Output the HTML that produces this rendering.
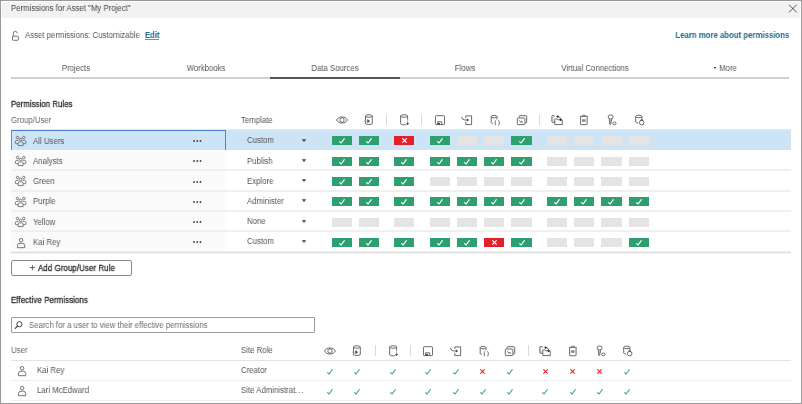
<!DOCTYPE html><html><head><meta charset="utf-8"><style>
html,body{margin:0;padding:0;width:802px;height:404px;overflow:hidden;background:#fff;font-family:"Liberation Sans", sans-serif;}
.t{position:absolute;white-space:nowrap;line-height:12px;will-change:transform;}
.r{position:absolute;}
.ic{position:absolute;overflow:visible;}
</style></head><body>
<div class="r" style="left:0.00px;top:0.00px;width:802.00px;height:404.00px;background:#fff;box-sizing:border-box;border:1px solid #9a9a9a;"></div>
<div class="r" style="left:2.00px;top:2.00px;width:798.00px;height:15.50px;background:#f2f2f2;"></div>
<div class="t" style="left:11.00px;transform-origin:0 0;top:1.93px;font-size:8.580px;transform:scaleX(0.9091);color:#444;font-weight:normal;">Permissions for Asset "My Project"</div>
<svg class="ic" style="left:788px;top:4px" width="10" height="10" viewBox="0 0 10 10"><path d="M1,0.7 L8.7,8.4 M8.7,0.7 L1,8.4" stroke="#444" stroke-width="0.9"/></svg>
<svg class="ic" style="left:11px;top:30px" width="9" height="12" viewBox="0 0 9 12"><path d="M2.3,6.2 V3.4 Q2.3,1.3 4.3,1.3 Q5.9,1.3 6.5,3.3" fill="none" stroke="#666" stroke-width="0.9"/><rect x="1.5" y="6.2" width="5.9" height="4.1" rx="0.8" fill="none" stroke="#666" stroke-width="0.9"/></svg>
<div class="t" style="left:25.00px;transform-origin:0 0;top:29.03px;font-size:8.580px;transform:scaleX(0.9091);color:#555;font-weight:normal;">Asset permissions: Customizable</div>
<div class="t" style="left:144.60px;transform-origin:0 0;top:29.03px;font-size:8.580px;transform:scaleX(0.9091);color:#1c6a8e;font-weight:bold;letter-spacing:-0.12px;">Edit</div>
<div class="r" style="left:144.60px;top:39.20px;width:14.30px;height:1.00px;background:#5f97b5;"></div>
<div class="t" style="right:12.20px;transform-origin:100% 0;top:29.03px;font-size:8.580px;transform:scaleX(0.9091);color:#1c6a8e;font-weight:bold;">Learn more about permissions</div>
<div class="r" style="left:11.00px;top:77.00px;width:778.00px;height:2.00px;background:#cfcfcf;"></div>
<div class="r" style="left:270.33px;top:77.00px;width:129.67px;height:2.00px;background:#555;"></div>
<div class="t" style="left:-24.17px;width:200px;text-align:center;transform-origin:50% 0;top:61.93px;font-size:8.580px;transform:scaleX(0.9091);color:#555;font-weight:normal;">Projects</div>
<div class="t" style="left:105.50px;width:200px;text-align:center;transform-origin:50% 0;top:61.93px;font-size:8.580px;transform:scaleX(0.9091);color:#555;font-weight:normal;">Workbooks</div>
<div class="t" style="left:235.17px;width:200px;text-align:center;transform-origin:50% 0;top:61.93px;font-size:8.580px;transform:scaleX(0.9091);color:#555;font-weight:normal;">Data Sources</div>
<div class="t" style="left:364.83px;width:200px;text-align:center;transform-origin:50% 0;top:61.93px;font-size:8.580px;transform:scaleX(0.9091);color:#555;font-weight:normal;">Flows</div>
<div class="t" style="left:494.50px;width:200px;text-align:center;transform-origin:50% 0;top:61.93px;font-size:8.580px;transform:scaleX(0.9091);color:#555;font-weight:normal;">Virtual Connections</div>
<div class="t" style="left:628.17px;width:200px;text-align:center;transform-origin:50% 0;top:61.93px;font-size:8.580px;transform:scaleX(0.9091);color:#555;font-weight:normal;">More</div>
<svg class="ic" style="left:712.50px;top:66px" width="4" height="4" viewBox="0 0 4 4"><path d="M0.7,1.1 H3.3 L2,2.9 Z" fill="#333"/></svg>
<div class="t" style="left:11.00px;transform-origin:0 0;top:97.83px;font-size:8.580px;transform:scaleX(0.9091);color:#333;font-weight:normal;letter-spacing:0.06px;-webkit-text-stroke:0.35px #333;">Permission Rules</div>
<div class="t" style="left:11.00px;transform-origin:0 0;top:114.03px;font-size:8.580px;transform:scaleX(0.9091);color:#666;font-weight:normal;">Group/User</div>
<div class="t" style="left:241.30px;transform-origin:0 0;top:113.93px;font-size:8.580px;transform:scaleX(0.9091);color:#555;font-weight:normal;">Template</div>
<svg class="ic" style="left:333.70px;top:111.70px" width="16" height="16" viewBox="-8 -8 16 16"><path d="M-5.4,0 C-3.4,-4.1 3.4,-4.1 5.4,0 C3.4,4.1 -3.4,4.1 -5.4,0 Z" fill="none" stroke="#5a5a5a" stroke-width="0.9"/><circle cx="0" cy="0" r="2.2" fill="none" stroke="#5a5a5a" stroke-width="0.9"/></svg>
<svg class="ic" style="left:360.90px;top:111.70px" width="16" height="16" viewBox="-8 -8 16 16"><path d="M-3.5,-4 V3.6 A3.6,1.3 0 0 0 3.3,3.6 V-4" fill="none" stroke="#5a5a5a" stroke-width="0.9"/><ellipse cx="-0.1" cy="-4" rx="3.4" ry="1.25" fill="none" stroke="#5a5a5a" stroke-width="0.9"/><path d="M-5.1,1.2 H-1.4" stroke="#aaa" stroke-width="0.9"/><path d="M-1.6,-0.9 L1,1.2 L-1.6,3.3 Z" fill="#444"/></svg>
<svg class="ic" style="left:396.35px;top:111.70px" width="16" height="16" viewBox="-8 -8 16 16"><path d="M3.6,-0.3 V-4 M-3.4,-4 V3.5 A3.5,1.3 0 0 0 2.2,4.6" fill="none" stroke="#5a5a5a" stroke-width="0.9"/><ellipse cx="0.1" cy="-4" rx="3.5" ry="1.25" fill="none" stroke="#5a5a5a" stroke-width="0.9"/><path d="M3.6,0.3 V3" stroke="#999" stroke-width="0.9"/><path d="M2.1,3 L5.1,3 L3.6,5.2 Z" fill="#444"/></svg>
<svg class="ic" style="left:431.95px;top:111.70px" width="16" height="16" viewBox="-8 -8 16 16"><rect x="-4.55" y="-4.3" width="9.1" height="8.9" rx="0.7" fill="none" stroke="#5a5a5a" stroke-width="0.9"/><path d="M-2.45,4.6 V1.8 H1.75 V4.6" fill="none" stroke="#5a5a5a" stroke-width="0.9"/><rect x="-2" y="2.9" width="1.9" height="1.9" fill="#444"/></svg>
<svg class="ic" style="left:459.05px;top:111.70px" width="16" height="16" viewBox="-8 -8 16 16"><path d="M-1.2,-2 V-4.1 H4.6 V4.6 H-1.2 V1.9" fill="none" stroke="#5a5a5a" stroke-width="0.9"/><path d="M-5.5,-3.2 Q-5,0 -2.2,0 H0.2" fill="none" stroke="#5a5a5a" stroke-width="0.9"/><path d="M-0.1,-1.6 L2.3,0 L-0.1,1.6 Z" fill="#444"/></svg>
<svg class="ic" style="left:486.15px;top:111.70px" width="16" height="16" viewBox="-8 -8 16 16"><path d="M-2.8,-3.4 V2.5 Q-2.8,3.3 -1.2,3.5 M3,-3.4 V-0.6" fill="none" stroke="#5a5a5a" stroke-width="0.9"/><ellipse cx="0.1" cy="-3.4" rx="2.9" ry="1.2" fill="none" stroke="#5a5a5a" stroke-width="0.9"/><path d="M2.1,0.3 Q1.3,0.4 1.3,1.6 V2.2 Q1.3,2.7 0.8,2.7 Q1.3,2.8 1.3,3.3 V3.9 Q1.3,5.1 2.1,5.2 M4.4,0.3 Q5.2,0.4 5.2,1.6 V2.2 Q5.2,2.7 5.7,2.7 Q5.2,2.8 5.2,3.3 V3.9 Q5.2,5.1 4.4,5.2" fill="none" stroke="#5a5a5a" stroke-width="0.85"/></svg>
<svg class="ic" style="left:513.55px;top:111.70px" width="16" height="16" viewBox="-8 -8 16 16"><path d="M-2.8,-2.5 V-3.7 Q-2.8,-4.3 -2.1,-4.3 H4.1 Q4.7,-4.3 4.7,-3.6 V2.2 Q4.7,2.8 4.1,2.8 H3.1" fill="none" stroke="#5a5a5a" stroke-width="0.9"/><rect x="-4.7" y="-2.0" width="7.6" height="6.6" rx="0.8" fill="none" stroke="#5a5a5a" stroke-width="0.9"/><path d="M-2.6,0.2 L-1.2,2.3 L-0.4,1 L0.6,2.8" fill="none" stroke="#5a5a5a" stroke-width="0.85"/></svg>
<svg class="ic" style="left:548.95px;top:111.70px" width="16" height="16" viewBox="-8 -8 16 16"><path d="M-2.4,2.3 H-4.6 Q-5.1,2.3 -5.1,1.8 V-3.9 Q-5.1,-4.5 -4.5,-4.5 H-3.3 Q-2.5,-4.5 -2.5,-3.7" fill="#e6e6e6" stroke="#5a5a5a" stroke-width="0.9"/><path d="M-2.2,4.6 V-0.6 Q-2.2,-1.1 -1.7,-1.1 H-0.1 L0.7,-0.2 H4.8 Q5.3,-0.2 5.3,0.3 V4.6 Z" fill="#fff" stroke="#5a5a5a" stroke-width="0.9"/><path d="M0.6,-3.4 Q3.6,-3.6 3.7,-0.4" fill="none" stroke="#5a5a5a" stroke-width="0.9"/><path d="M0.6,-4.8 L2,-3.4 L0.6,-2 L-0.8,-3.4 Z" fill="#333"/><path d="M3.7,-1.6 L5.1,-0.2 L3.7,1.2 L2.3,-0.2 Z" fill="#333"/></svg>
<svg class="ic" style="left:576.10px;top:111.70px" width="16" height="16" viewBox="-8 -8 16 16"><path d="M-3.4,-3.5 V4.2 Q-3.4,4.7 -2.9,4.7 H2.6 Q3.1,4.7 3.1,4.2 V-3.5" fill="none" stroke="#5a5a5a" stroke-width="0.9"/><path d="M-3.9,-3.6 H3.6 M-1.9,-3.7 Q-1.9,-4.9 -0.15,-4.9 Q1.6,-4.9 1.6,-3.7" fill="none" stroke="#5a5a5a" stroke-width="0.9"/><rect x="-2" y="-0.7" width="3.6" height="2.5" fill="#8a8a8a"/></svg>
<svg class="ic" style="left:603.45px;top:111.70px" width="16" height="16" viewBox="-8 -8 16 16"><ellipse cx="-0.35" cy="-3.1" rx="2.5" ry="2.0" fill="none" stroke="#5a5a5a" stroke-width="0.9"/><path d="M-1.7,-1.3 L-1.3,4.3 Q-0.85,4.9 -0.4,4.3 L0.9,-1.3" fill="#bbb" stroke="#5a5a5a" stroke-width="0.8" stroke-linejoin="round"/><ellipse cx="3.35" cy="3.4" rx="1.7" ry="1.35" fill="none" stroke="#5a5a5a" stroke-width="0.9"/></svg>
<svg class="ic" style="left:630.90px;top:111.70px" width="16" height="16" viewBox="-8 -8 16 16"><path d="M-3.3,-3.6 V2.1 Q-3.3,2.9 -0.9,3.1 M2.9,-3.6 V-0.2" fill="none" stroke="#5a5a5a" stroke-width="0.9"/><ellipse cx="-0.2" cy="-3.6" rx="3.1" ry="1.25" fill="none" stroke="#5a5a5a" stroke-width="0.9"/><circle cx="2.65" cy="2.6" r="2.3" fill="#fff" stroke="#5a5a5a" stroke-width="0.9"/><path d="M1.5,0.6 Q1.8,-0.7 2.9,-0.7 Q3.9,-0.6 3.9,0.6 Z" fill="#333"/></svg>
<div class="r" style="left:386.00px;top:114.50px;width:1.00px;height:10.50px;background:#d9d9d9;"></div>
<div class="r" style="left:421.20px;top:114.50px;width:1.00px;height:10.50px;background:#d9d9d9;"></div>
<div class="r" style="left:539.10px;top:114.50px;width:1.00px;height:10.50px;background:#d9d9d9;"></div>
<div class="r" style="left:11.00px;top:129.00px;width:779.50px;height:1.00px;background:#e8e8e8;"></div>
<div class="r" style="left:11.00px;top:130.00px;width:779.50px;height:19.80px;background:#cde3f6;"></div>
<div class="r" style="left:11.00px;top:130.00px;width:214.50px;height:19.80px;background:transparent;box-sizing:border-box;border-left:1px solid #5a8fd0;border-top:1px solid #4a80c4;border-right:1.5px solid #4a80c4;"></div>
<svg class="ic" style="left:14.80px;top:134.90px" width="12" height="12" viewBox="0 0 12 12"><circle cx="2.5" cy="2.5" r="1.25" fill="none" stroke="#666" stroke-width="0.85"/><circle cx="8.8" cy="2.5" r="1.25" fill="none" stroke="#666" stroke-width="0.85"/><circle cx="5.65" cy="4.4" r="1.25" fill="none" stroke="#666" stroke-width="0.85"/><path d="M3.1,8.7 H1.2 Q0.4,8.7 0.4,7.9 V6.8 Q0.4,5.4 1.8,5.4 H3.6" fill="none" stroke="#666" stroke-width="0.85"/><path d="M8.2,8.7 H10.1 Q10.9,8.7 10.9,7.9 V6.8 Q10.9,5.4 9.5,5.4 H7.7" fill="none" stroke="#666" stroke-width="0.85"/><path d="M3.2,10.6 V8.3 Q3.2,6.8 4.6,6.8 H6.7 Q8.1,6.8 8.1,8.3 V10.6 Z" fill="none" stroke="#666" stroke-width="0.85"/></svg>
<div class="t" style="left:33.40px;transform-origin:0 0;top:134.73px;font-size:8.580px;transform:scaleX(0.9091);color:#555;font-weight:normal;">All Users</div>
<svg class="ic" style="left:191.70px;top:139.10px" width="12" height="4" viewBox="0 0 12 4"><circle cx="2" cy="2" r="0.95" fill="#444"/><circle cx="5.25" cy="2" r="0.95" fill="#444"/><circle cx="8.5" cy="2" r="0.95" fill="#444"/></svg>
<div class="t" style="left:246.60px;transform-origin:0 0;top:134.33px;font-size:8.580px;transform:scaleX(0.9091);color:#555;font-weight:normal;">Custom</div>
<svg class="ic" style="left:301.30px;top:137.80px" width="6" height="5" viewBox="0 0 6 5"><path d="M0.8,1.2 H5.2 L3,3.9 Z" fill="#444"/></svg>
<div class="r" style="left:331.60px;top:136.30px;width:20.20px;height:9.00px;background:#2e9f6e;"></div>
<svg class="ic" style="left:336.70px;top:136.30px" width="10" height="10" viewBox="-5 -5 10 10"><path d="M-2.4,0.6 L-0.9,2 L2.3,-2.3" fill="none" stroke="#fff" stroke-width="1.15" stroke-linecap="round" stroke-linejoin="round"/></svg>
<div class="r" style="left:358.80px;top:136.30px;width:20.20px;height:9.00px;background:#2e9f6e;"></div>
<svg class="ic" style="left:363.90px;top:136.30px" width="10" height="10" viewBox="-5 -5 10 10"><path d="M-2.4,0.6 L-0.9,2 L2.3,-2.3" fill="none" stroke="#fff" stroke-width="1.15" stroke-linecap="round" stroke-linejoin="round"/></svg>
<div class="r" style="left:394.25px;top:136.30px;width:20.20px;height:9.00px;background:#e3202a;"></div>
<svg class="ic" style="left:399px;top:135px" width="10" height="10" viewBox="-5.5 -5.5 10 10"><path d="M-2.15,-2.15 L2.15,2.15 M2.15,-2.15 L-2.15,2.15" fill="none" stroke="#fff" stroke-width="1.15" stroke-linecap="butt"/></svg>
<div class="r" style="left:429.85px;top:136.30px;width:20.20px;height:9.00px;background:#2e9f6e;"></div>
<svg class="ic" style="left:434.95px;top:136.30px" width="10" height="10" viewBox="-5 -5 10 10"><path d="M-2.4,0.6 L-0.9,2 L2.3,-2.3" fill="none" stroke="#fff" stroke-width="1.15" stroke-linecap="round" stroke-linejoin="round"/></svg>
<div class="r" style="left:456.95px;top:136.30px;width:20.20px;height:9.00px;background:#e4e4e4;"></div>
<div class="r" style="left:484.05px;top:136.30px;width:20.20px;height:9.00px;background:#e4e4e4;"></div>
<div class="r" style="left:511.45px;top:136.30px;width:20.20px;height:9.00px;background:#2e9f6e;"></div>
<svg class="ic" style="left:516.55px;top:136.30px" width="10" height="10" viewBox="-5 -5 10 10"><path d="M-2.4,0.6 L-0.9,2 L2.3,-2.3" fill="none" stroke="#fff" stroke-width="1.15" stroke-linecap="round" stroke-linejoin="round"/></svg>
<div class="r" style="left:546.85px;top:136.30px;width:20.20px;height:9.00px;background:#e4e4e4;"></div>
<div class="r" style="left:574.00px;top:136.30px;width:20.20px;height:9.00px;background:#e4e4e4;"></div>
<div class="r" style="left:601.35px;top:136.30px;width:20.20px;height:9.00px;background:#e4e4e4;"></div>
<div class="r" style="left:628.80px;top:136.30px;width:20.20px;height:9.00px;background:#e4e4e4;"></div>
<div class="r" style="left:11.00px;top:151.00px;width:214.00px;height:21.00px;background:#fafafa;"></div>
<svg class="ic" style="left:14.80px;top:155.10px" width="12" height="12" viewBox="0 0 12 12"><circle cx="2.5" cy="2.5" r="1.25" fill="none" stroke="#666" stroke-width="0.85"/><circle cx="8.8" cy="2.5" r="1.25" fill="none" stroke="#666" stroke-width="0.85"/><circle cx="5.65" cy="4.4" r="1.25" fill="none" stroke="#666" stroke-width="0.85"/><path d="M3.1,8.7 H1.2 Q0.4,8.7 0.4,7.9 V6.8 Q0.4,5.4 1.8,5.4 H3.6" fill="none" stroke="#666" stroke-width="0.85"/><path d="M8.2,8.7 H10.1 Q10.9,8.7 10.9,7.9 V6.8 Q10.9,5.4 9.5,5.4 H7.7" fill="none" stroke="#666" stroke-width="0.85"/><path d="M3.2,10.6 V8.3 Q3.2,6.8 4.6,6.8 H6.7 Q8.1,6.8 8.1,8.3 V10.6 Z" fill="none" stroke="#666" stroke-width="0.85"/></svg>
<div class="t" style="left:33.40px;transform-origin:0 0;top:154.93px;font-size:8.580px;transform:scaleX(0.9091);color:#555;font-weight:normal;">Analysts</div>
<svg class="ic" style="left:191.70px;top:159.30px" width="12" height="4" viewBox="0 0 12 4"><circle cx="2" cy="2" r="0.95" fill="#444"/><circle cx="5.25" cy="2" r="0.95" fill="#444"/><circle cx="8.5" cy="2" r="0.95" fill="#444"/></svg>
<div class="t" style="left:246.60px;transform-origin:0 0;top:154.53px;font-size:8.580px;transform:scaleX(0.9091);color:#555;font-weight:normal;">Publish</div>
<svg class="ic" style="left:301.30px;top:158.00px" width="6" height="5" viewBox="0 0 6 5"><path d="M0.8,1.2 H5.2 L3,3.9 Z" fill="#444"/></svg>
<div class="r" style="left:331.60px;top:156.60px;width:20.20px;height:9.00px;background:#2e9f6e;"></div>
<svg class="ic" style="left:336.70px;top:156.60px" width="10" height="10" viewBox="-5 -5 10 10"><path d="M-2.4,0.6 L-0.9,2 L2.3,-2.3" fill="none" stroke="#fff" stroke-width="1.15" stroke-linecap="round" stroke-linejoin="round"/></svg>
<div class="r" style="left:358.80px;top:156.60px;width:20.20px;height:9.00px;background:#2e9f6e;"></div>
<svg class="ic" style="left:363.90px;top:156.60px" width="10" height="10" viewBox="-5 -5 10 10"><path d="M-2.4,0.6 L-0.9,2 L2.3,-2.3" fill="none" stroke="#fff" stroke-width="1.15" stroke-linecap="round" stroke-linejoin="round"/></svg>
<div class="r" style="left:394.25px;top:156.60px;width:20.20px;height:9.00px;background:#2e9f6e;"></div>
<svg class="ic" style="left:399.35px;top:156.60px" width="10" height="10" viewBox="-5 -5 10 10"><path d="M-2.4,0.6 L-0.9,2 L2.3,-2.3" fill="none" stroke="#fff" stroke-width="1.15" stroke-linecap="round" stroke-linejoin="round"/></svg>
<div class="r" style="left:429.85px;top:156.60px;width:20.20px;height:9.00px;background:#2e9f6e;"></div>
<svg class="ic" style="left:434.95px;top:156.60px" width="10" height="10" viewBox="-5 -5 10 10"><path d="M-2.4,0.6 L-0.9,2 L2.3,-2.3" fill="none" stroke="#fff" stroke-width="1.15" stroke-linecap="round" stroke-linejoin="round"/></svg>
<div class="r" style="left:456.95px;top:156.60px;width:20.20px;height:9.00px;background:#2e9f6e;"></div>
<svg class="ic" style="left:462.05px;top:156.60px" width="10" height="10" viewBox="-5 -5 10 10"><path d="M-2.4,0.6 L-0.9,2 L2.3,-2.3" fill="none" stroke="#fff" stroke-width="1.15" stroke-linecap="round" stroke-linejoin="round"/></svg>
<div class="r" style="left:484.05px;top:156.60px;width:20.20px;height:9.00px;background:#2e9f6e;"></div>
<svg class="ic" style="left:489.15px;top:156.60px" width="10" height="10" viewBox="-5 -5 10 10"><path d="M-2.4,0.6 L-0.9,2 L2.3,-2.3" fill="none" stroke="#fff" stroke-width="1.15" stroke-linecap="round" stroke-linejoin="round"/></svg>
<div class="r" style="left:511.45px;top:156.60px;width:20.20px;height:9.00px;background:#2e9f6e;"></div>
<svg class="ic" style="left:516.55px;top:156.60px" width="10" height="10" viewBox="-5 -5 10 10"><path d="M-2.4,0.6 L-0.9,2 L2.3,-2.3" fill="none" stroke="#fff" stroke-width="1.15" stroke-linecap="round" stroke-linejoin="round"/></svg>
<div class="r" style="left:546.85px;top:156.60px;width:20.20px;height:9.00px;background:#e4e4e4;"></div>
<div class="r" style="left:574.00px;top:156.60px;width:20.20px;height:9.00px;background:#e4e4e4;"></div>
<div class="r" style="left:601.35px;top:156.60px;width:20.20px;height:9.00px;background:#e4e4e4;"></div>
<div class="r" style="left:628.80px;top:156.60px;width:20.20px;height:9.00px;background:#e4e4e4;"></div>
<div class="r" style="left:11.00px;top:170.00px;width:214.00px;height:21.00px;background:#fafafa;"></div>
<svg class="ic" style="left:14.80px;top:175.30px" width="12" height="12" viewBox="0 0 12 12"><circle cx="2.5" cy="2.5" r="1.25" fill="none" stroke="#666" stroke-width="0.85"/><circle cx="8.8" cy="2.5" r="1.25" fill="none" stroke="#666" stroke-width="0.85"/><circle cx="5.65" cy="4.4" r="1.25" fill="none" stroke="#666" stroke-width="0.85"/><path d="M3.1,8.7 H1.2 Q0.4,8.7 0.4,7.9 V6.8 Q0.4,5.4 1.8,5.4 H3.6" fill="none" stroke="#666" stroke-width="0.85"/><path d="M8.2,8.7 H10.1 Q10.9,8.7 10.9,7.9 V6.8 Q10.9,5.4 9.5,5.4 H7.7" fill="none" stroke="#666" stroke-width="0.85"/><path d="M3.2,10.6 V8.3 Q3.2,6.8 4.6,6.8 H6.7 Q8.1,6.8 8.1,8.3 V10.6 Z" fill="none" stroke="#666" stroke-width="0.85"/></svg>
<div class="t" style="left:33.40px;transform-origin:0 0;top:175.13px;font-size:8.580px;transform:scaleX(0.9091);color:#555;font-weight:normal;">Green</div>
<svg class="ic" style="left:191.70px;top:179.50px" width="12" height="4" viewBox="0 0 12 4"><circle cx="2" cy="2" r="0.95" fill="#444"/><circle cx="5.25" cy="2" r="0.95" fill="#444"/><circle cx="8.5" cy="2" r="0.95" fill="#444"/></svg>
<div class="t" style="left:246.60px;transform-origin:0 0;top:174.73px;font-size:8.580px;transform:scaleX(0.9091);color:#555;font-weight:normal;">Explore</div>
<svg class="ic" style="left:301.30px;top:178.20px" width="6" height="5" viewBox="0 0 6 5"><path d="M0.8,1.2 H5.2 L3,3.9 Z" fill="#444"/></svg>
<div class="r" style="left:331.60px;top:176.90px;width:20.20px;height:9.00px;background:#2e9f6e;"></div>
<svg class="ic" style="left:336.70px;top:176.90px" width="10" height="10" viewBox="-5 -5 10 10"><path d="M-2.4,0.6 L-0.9,2 L2.3,-2.3" fill="none" stroke="#fff" stroke-width="1.15" stroke-linecap="round" stroke-linejoin="round"/></svg>
<div class="r" style="left:358.80px;top:176.90px;width:20.20px;height:9.00px;background:#2e9f6e;"></div>
<svg class="ic" style="left:363.90px;top:176.90px" width="10" height="10" viewBox="-5 -5 10 10"><path d="M-2.4,0.6 L-0.9,2 L2.3,-2.3" fill="none" stroke="#fff" stroke-width="1.15" stroke-linecap="round" stroke-linejoin="round"/></svg>
<div class="r" style="left:394.25px;top:176.90px;width:20.20px;height:9.00px;background:#2e9f6e;"></div>
<svg class="ic" style="left:399.35px;top:176.90px" width="10" height="10" viewBox="-5 -5 10 10"><path d="M-2.4,0.6 L-0.9,2 L2.3,-2.3" fill="none" stroke="#fff" stroke-width="1.15" stroke-linecap="round" stroke-linejoin="round"/></svg>
<div class="r" style="left:429.85px;top:176.90px;width:20.20px;height:9.00px;background:#e4e4e4;"></div>
<div class="r" style="left:456.95px;top:176.90px;width:20.20px;height:9.00px;background:#e4e4e4;"></div>
<div class="r" style="left:484.05px;top:176.90px;width:20.20px;height:9.00px;background:#e4e4e4;"></div>
<div class="r" style="left:511.45px;top:176.90px;width:20.20px;height:9.00px;background:#e4e4e4;"></div>
<div class="r" style="left:546.85px;top:176.90px;width:20.20px;height:9.00px;background:#e4e4e4;"></div>
<div class="r" style="left:574.00px;top:176.90px;width:20.20px;height:9.00px;background:#e4e4e4;"></div>
<div class="r" style="left:601.35px;top:176.90px;width:20.20px;height:9.00px;background:#e4e4e4;"></div>
<div class="r" style="left:628.80px;top:176.90px;width:20.20px;height:9.00px;background:#e4e4e4;"></div>
<div class="r" style="left:11.00px;top:191.00px;width:214.00px;height:21.00px;background:#fafafa;"></div>
<svg class="ic" style="left:14.80px;top:195.50px" width="12" height="12" viewBox="0 0 12 12"><circle cx="2.5" cy="2.5" r="1.25" fill="none" stroke="#666" stroke-width="0.85"/><circle cx="8.8" cy="2.5" r="1.25" fill="none" stroke="#666" stroke-width="0.85"/><circle cx="5.65" cy="4.4" r="1.25" fill="none" stroke="#666" stroke-width="0.85"/><path d="M3.1,8.7 H1.2 Q0.4,8.7 0.4,7.9 V6.8 Q0.4,5.4 1.8,5.4 H3.6" fill="none" stroke="#666" stroke-width="0.85"/><path d="M8.2,8.7 H10.1 Q10.9,8.7 10.9,7.9 V6.8 Q10.9,5.4 9.5,5.4 H7.7" fill="none" stroke="#666" stroke-width="0.85"/><path d="M3.2,10.6 V8.3 Q3.2,6.8 4.6,6.8 H6.7 Q8.1,6.8 8.1,8.3 V10.6 Z" fill="none" stroke="#666" stroke-width="0.85"/></svg>
<div class="t" style="left:33.40px;transform-origin:0 0;top:195.33px;font-size:8.580px;transform:scaleX(0.9091);color:#555;font-weight:normal;">Purple</div>
<svg class="ic" style="left:191.70px;top:199.70px" width="12" height="4" viewBox="0 0 12 4"><circle cx="2" cy="2" r="0.95" fill="#444"/><circle cx="5.25" cy="2" r="0.95" fill="#444"/><circle cx="8.5" cy="2" r="0.95" fill="#444"/></svg>
<div class="t" style="left:246.60px;transform-origin:0 0;top:194.93px;font-size:8.580px;transform:scaleX(0.9091);color:#555;font-weight:normal;">Administer</div>
<svg class="ic" style="left:301.30px;top:198.40px" width="6" height="5" viewBox="0 0 6 5"><path d="M0.8,1.2 H5.2 L3,3.9 Z" fill="#444"/></svg>
<div class="r" style="left:331.60px;top:197.20px;width:20.20px;height:9.00px;background:#2e9f6e;"></div>
<svg class="ic" style="left:336.70px;top:197.20px" width="10" height="10" viewBox="-5 -5 10 10"><path d="M-2.4,0.6 L-0.9,2 L2.3,-2.3" fill="none" stroke="#fff" stroke-width="1.15" stroke-linecap="round" stroke-linejoin="round"/></svg>
<div class="r" style="left:358.80px;top:197.20px;width:20.20px;height:9.00px;background:#2e9f6e;"></div>
<svg class="ic" style="left:363.90px;top:197.20px" width="10" height="10" viewBox="-5 -5 10 10"><path d="M-2.4,0.6 L-0.9,2 L2.3,-2.3" fill="none" stroke="#fff" stroke-width="1.15" stroke-linecap="round" stroke-linejoin="round"/></svg>
<div class="r" style="left:394.25px;top:197.20px;width:20.20px;height:9.00px;background:#2e9f6e;"></div>
<svg class="ic" style="left:399.35px;top:197.20px" width="10" height="10" viewBox="-5 -5 10 10"><path d="M-2.4,0.6 L-0.9,2 L2.3,-2.3" fill="none" stroke="#fff" stroke-width="1.15" stroke-linecap="round" stroke-linejoin="round"/></svg>
<div class="r" style="left:429.85px;top:197.20px;width:20.20px;height:9.00px;background:#2e9f6e;"></div>
<svg class="ic" style="left:434.95px;top:197.20px" width="10" height="10" viewBox="-5 -5 10 10"><path d="M-2.4,0.6 L-0.9,2 L2.3,-2.3" fill="none" stroke="#fff" stroke-width="1.15" stroke-linecap="round" stroke-linejoin="round"/></svg>
<div class="r" style="left:456.95px;top:197.20px;width:20.20px;height:9.00px;background:#2e9f6e;"></div>
<svg class="ic" style="left:462.05px;top:197.20px" width="10" height="10" viewBox="-5 -5 10 10"><path d="M-2.4,0.6 L-0.9,2 L2.3,-2.3" fill="none" stroke="#fff" stroke-width="1.15" stroke-linecap="round" stroke-linejoin="round"/></svg>
<div class="r" style="left:484.05px;top:197.20px;width:20.20px;height:9.00px;background:#2e9f6e;"></div>
<svg class="ic" style="left:489.15px;top:197.20px" width="10" height="10" viewBox="-5 -5 10 10"><path d="M-2.4,0.6 L-0.9,2 L2.3,-2.3" fill="none" stroke="#fff" stroke-width="1.15" stroke-linecap="round" stroke-linejoin="round"/></svg>
<div class="r" style="left:511.45px;top:197.20px;width:20.20px;height:9.00px;background:#2e9f6e;"></div>
<svg class="ic" style="left:516.55px;top:197.20px" width="10" height="10" viewBox="-5 -5 10 10"><path d="M-2.4,0.6 L-0.9,2 L2.3,-2.3" fill="none" stroke="#fff" stroke-width="1.15" stroke-linecap="round" stroke-linejoin="round"/></svg>
<div class="r" style="left:546.85px;top:197.20px;width:20.20px;height:9.00px;background:#2e9f6e;"></div>
<svg class="ic" style="left:551.95px;top:197.20px" width="10" height="10" viewBox="-5 -5 10 10"><path d="M-2.4,0.6 L-0.9,2 L2.3,-2.3" fill="none" stroke="#fff" stroke-width="1.15" stroke-linecap="round" stroke-linejoin="round"/></svg>
<div class="r" style="left:574.00px;top:197.20px;width:20.20px;height:9.00px;background:#2e9f6e;"></div>
<svg class="ic" style="left:579.10px;top:197.20px" width="10" height="10" viewBox="-5 -5 10 10"><path d="M-2.4,0.6 L-0.9,2 L2.3,-2.3" fill="none" stroke="#fff" stroke-width="1.15" stroke-linecap="round" stroke-linejoin="round"/></svg>
<div class="r" style="left:601.35px;top:197.20px;width:20.20px;height:9.00px;background:#2e9f6e;"></div>
<svg class="ic" style="left:606.45px;top:197.20px" width="10" height="10" viewBox="-5 -5 10 10"><path d="M-2.4,0.6 L-0.9,2 L2.3,-2.3" fill="none" stroke="#fff" stroke-width="1.15" stroke-linecap="round" stroke-linejoin="round"/></svg>
<div class="r" style="left:628.80px;top:197.20px;width:20.20px;height:9.00px;background:#2e9f6e;"></div>
<svg class="ic" style="left:633.90px;top:197.20px" width="10" height="10" viewBox="-5 -5 10 10"><path d="M-2.4,0.6 L-0.9,2 L2.3,-2.3" fill="none" stroke="#fff" stroke-width="1.15" stroke-linecap="round" stroke-linejoin="round"/></svg>
<div class="r" style="left:11.00px;top:211.00px;width:214.00px;height:21.00px;background:#fafafa;"></div>
<svg class="ic" style="left:14.80px;top:215.70px" width="12" height="12" viewBox="0 0 12 12"><circle cx="2.5" cy="2.5" r="1.25" fill="none" stroke="#666" stroke-width="0.85"/><circle cx="8.8" cy="2.5" r="1.25" fill="none" stroke="#666" stroke-width="0.85"/><circle cx="5.65" cy="4.4" r="1.25" fill="none" stroke="#666" stroke-width="0.85"/><path d="M3.1,8.7 H1.2 Q0.4,8.7 0.4,7.9 V6.8 Q0.4,5.4 1.8,5.4 H3.6" fill="none" stroke="#666" stroke-width="0.85"/><path d="M8.2,8.7 H10.1 Q10.9,8.7 10.9,7.9 V6.8 Q10.9,5.4 9.5,5.4 H7.7" fill="none" stroke="#666" stroke-width="0.85"/><path d="M3.2,10.6 V8.3 Q3.2,6.8 4.6,6.8 H6.7 Q8.1,6.8 8.1,8.3 V10.6 Z" fill="none" stroke="#666" stroke-width="0.85"/></svg>
<div class="t" style="left:33.40px;transform-origin:0 0;top:215.53px;font-size:8.580px;transform:scaleX(0.9091);color:#555;font-weight:normal;">Yellow</div>
<svg class="ic" style="left:191.70px;top:219.90px" width="12" height="4" viewBox="0 0 12 4"><circle cx="2" cy="2" r="0.95" fill="#444"/><circle cx="5.25" cy="2" r="0.95" fill="#444"/><circle cx="8.5" cy="2" r="0.95" fill="#444"/></svg>
<div class="t" style="left:246.60px;transform-origin:0 0;top:215.13px;font-size:8.580px;transform:scaleX(0.9091);color:#555;font-weight:normal;">None</div>
<svg class="ic" style="left:301.30px;top:218.60px" width="6" height="5" viewBox="0 0 6 5"><path d="M0.8,1.2 H5.2 L3,3.9 Z" fill="#444"/></svg>
<div class="r" style="left:331.60px;top:217.50px;width:20.20px;height:9.00px;background:#e4e4e4;"></div>
<div class="r" style="left:358.80px;top:217.50px;width:20.20px;height:9.00px;background:#e4e4e4;"></div>
<div class="r" style="left:394.25px;top:217.50px;width:20.20px;height:9.00px;background:#e4e4e4;"></div>
<div class="r" style="left:429.85px;top:217.50px;width:20.20px;height:9.00px;background:#e4e4e4;"></div>
<div class="r" style="left:456.95px;top:217.50px;width:20.20px;height:9.00px;background:#e4e4e4;"></div>
<div class="r" style="left:484.05px;top:217.50px;width:20.20px;height:9.00px;background:#e4e4e4;"></div>
<div class="r" style="left:511.45px;top:217.50px;width:20.20px;height:9.00px;background:#e4e4e4;"></div>
<div class="r" style="left:546.85px;top:217.50px;width:20.20px;height:9.00px;background:#e4e4e4;"></div>
<div class="r" style="left:574.00px;top:217.50px;width:20.20px;height:9.00px;background:#e4e4e4;"></div>
<div class="r" style="left:601.35px;top:217.50px;width:20.20px;height:9.00px;background:#e4e4e4;"></div>
<div class="r" style="left:628.80px;top:217.50px;width:20.20px;height:9.00px;background:#e4e4e4;"></div>
<div class="r" style="left:11.00px;top:231.00px;width:214.00px;height:21.00px;background:#fafafa;"></div>
<svg class="ic" style="left:16.50px;top:237.50px" width="10" height="11" viewBox="0 0 10 11"><circle cx="4.1" cy="2.2" r="1.75" fill="none" stroke="#666" stroke-width="0.9"/><path d="M0.45,9.7 V7.8 Q0.45,5.2 3,5.2 H5.2 Q7.75,5.2 7.75,7.8 V9.7 Z" fill="none" stroke="#666" stroke-width="0.9"/></svg>
<div class="t" style="left:33.40px;transform-origin:0 0;top:235.73px;font-size:8.580px;transform:scaleX(0.9091);color:#555;font-weight:normal;">Kai Rey</div>
<svg class="ic" style="left:191.70px;top:240.10px" width="12" height="4" viewBox="0 0 12 4"><circle cx="2" cy="2" r="0.95" fill="#444"/><circle cx="5.25" cy="2" r="0.95" fill="#444"/><circle cx="8.5" cy="2" r="0.95" fill="#444"/></svg>
<div class="t" style="left:246.60px;transform-origin:0 0;top:235.33px;font-size:8.580px;transform:scaleX(0.9091);color:#555;font-weight:normal;">Custom</div>
<svg class="ic" style="left:301.30px;top:238.80px" width="6" height="5" viewBox="0 0 6 5"><path d="M0.8,1.2 H5.2 L3,3.9 Z" fill="#444"/></svg>
<div class="r" style="left:331.60px;top:237.80px;width:20.20px;height:9.00px;background:#2e9f6e;"></div>
<svg class="ic" style="left:336.70px;top:237.80px" width="10" height="10" viewBox="-5 -5 10 10"><path d="M-2.4,0.6 L-0.9,2 L2.3,-2.3" fill="none" stroke="#fff" stroke-width="1.15" stroke-linecap="round" stroke-linejoin="round"/></svg>
<div class="r" style="left:358.80px;top:237.80px;width:20.20px;height:9.00px;background:#2e9f6e;"></div>
<svg class="ic" style="left:363.90px;top:237.80px" width="10" height="10" viewBox="-5 -5 10 10"><path d="M-2.4,0.6 L-0.9,2 L2.3,-2.3" fill="none" stroke="#fff" stroke-width="1.15" stroke-linecap="round" stroke-linejoin="round"/></svg>
<div class="r" style="left:394.25px;top:237.80px;width:20.20px;height:9.00px;background:#2e9f6e;"></div>
<svg class="ic" style="left:399.35px;top:237.80px" width="10" height="10" viewBox="-5 -5 10 10"><path d="M-2.4,0.6 L-0.9,2 L2.3,-2.3" fill="none" stroke="#fff" stroke-width="1.15" stroke-linecap="round" stroke-linejoin="round"/></svg>
<div class="r" style="left:429.85px;top:237.80px;width:20.20px;height:9.00px;background:#2e9f6e;"></div>
<svg class="ic" style="left:434.95px;top:237.80px" width="10" height="10" viewBox="-5 -5 10 10"><path d="M-2.4,0.6 L-0.9,2 L2.3,-2.3" fill="none" stroke="#fff" stroke-width="1.15" stroke-linecap="round" stroke-linejoin="round"/></svg>
<div class="r" style="left:456.95px;top:237.80px;width:20.20px;height:9.00px;background:#2e9f6e;"></div>
<svg class="ic" style="left:462.05px;top:237.80px" width="10" height="10" viewBox="-5 -5 10 10"><path d="M-2.4,0.6 L-0.9,2 L2.3,-2.3" fill="none" stroke="#fff" stroke-width="1.15" stroke-linecap="round" stroke-linejoin="round"/></svg>
<div class="r" style="left:484.05px;top:237.80px;width:20.20px;height:9.00px;background:#e3202a;"></div>
<svg class="ic" style="left:489px;top:237px" width="10" height="10" viewBox="-5.5 -5.5 10 10"><path d="M-2.15,-2.15 L2.15,2.15 M2.15,-2.15 L-2.15,2.15" fill="none" stroke="#fff" stroke-width="1.15" stroke-linecap="butt"/></svg>
<div class="r" style="left:511.45px;top:237.80px;width:20.20px;height:9.00px;background:#2e9f6e;"></div>
<svg class="ic" style="left:516.55px;top:237.80px" width="10" height="10" viewBox="-5 -5 10 10"><path d="M-2.4,0.6 L-0.9,2 L2.3,-2.3" fill="none" stroke="#fff" stroke-width="1.15" stroke-linecap="round" stroke-linejoin="round"/></svg>
<div class="r" style="left:546.85px;top:237.80px;width:20.20px;height:9.00px;background:#e4e4e4;"></div>
<div class="r" style="left:574.00px;top:237.80px;width:20.20px;height:9.00px;background:#e4e4e4;"></div>
<div class="r" style="left:601.35px;top:237.80px;width:20.20px;height:9.00px;background:#e4e4e4;"></div>
<div class="r" style="left:628.80px;top:237.80px;width:20.20px;height:9.00px;background:#2e9f6e;"></div>
<svg class="ic" style="left:633.90px;top:237.80px" width="10" height="10" viewBox="-5 -5 10 10"><path d="M-2.4,0.6 L-0.9,2 L2.3,-2.3" fill="none" stroke="#fff" stroke-width="1.15" stroke-linecap="round" stroke-linejoin="round"/></svg>
<div class="r" style="left:11.00px;top:169.00px;width:779.50px;height:2.00px;background:#f0f0f0;"></div>
<div class="r" style="left:11.00px;top:190.00px;width:779.50px;height:2.00px;background:#f0f0f0;"></div>
<div class="r" style="left:11.00px;top:210.00px;width:779.50px;height:2.00px;background:#f0f0f0;"></div>
<div class="r" style="left:11.00px;top:230.00px;width:779.50px;height:2.00px;background:#f0f0f0;"></div>
<div class="r" style="left:11.00px;top:251.00px;width:779.50px;height:1.00px;background:#f1f1f1;"></div>
<div class="r" style="left:11.00px;top:252.00px;width:779.50px;height:1.00px;background:#dcdcdc;"></div>
<div class="r" style="left:11.00px;top:253.00px;width:779.50px;height:1.00px;background:#f6f6f6;"></div>
<div class="r" style="left:11.00px;top:260.00px;width:121.00px;height:15.50px;background:#fff;box-sizing:border-box;border:1px solid #8a8a8a;border-radius:2px;"></div>
<svg class="ic" style="left:29px;top:263px" width="7" height="8" viewBox="0 0 7 8"><path d="M0.8,4.6 H6 M3.4,2 V7.2" stroke="#555" stroke-width="0.9"/></svg>
<div class="t" style="left:38.40px;transform-origin:0 0;top:261.63px;font-size:8.580px;transform:scaleX(0.9091);color:#333;font-weight:normal;letter-spacing:0.14px;-webkit-text-stroke:0.35px #333;">Add Group/User Rule</div>
<div class="t" style="left:11.00px;transform-origin:0 0;top:293.93px;font-size:8.580px;transform:scaleX(0.9091);color:#333;font-weight:normal;letter-spacing:0.13px;-webkit-text-stroke:0.35px #333;">Effective Permissions</div>
<div class="r" style="left:11.00px;top:317.30px;width:304.00px;height:15.50px;background:#fff;box-sizing:border-box;border:1px solid #9c9c9c;border-radius:1px;"></div>
<svg class="ic" style="left:14px;top:320px" width="10" height="10" viewBox="0 0 10 10"><circle cx="5.4" cy="4.2" r="2.6" fill="none" stroke="#444" stroke-width="1"/><path d="M3.6,6.1 L1.3,8.4" stroke="#444" stroke-width="1.3" stroke-linecap="round"/></svg>
<div class="t" style="left:28.50px;transform-origin:0 0;top:318.83px;font-size:8.580px;transform:scaleX(0.9091);color:#6a6a6a;font-weight:normal;">Search for a user to view their effective permissions</div>
<div class="t" style="left:10.80px;transform-origin:0 0;top:343.93px;font-size:8.580px;transform:scaleX(0.9091);color:#666;font-weight:normal;">User</div>
<div class="t" style="left:240.50px;transform-origin:0 0;top:344.13px;font-size:8.580px;transform:scaleX(0.9091);color:#555;font-weight:normal;">Site Role</div>
<svg class="ic" style="left:322.20px;top:342.60px" width="16" height="16" viewBox="-8 -8 16 16"><path d="M-5.4,0 C-3.4,-4.1 3.4,-4.1 5.4,0 C3.4,4.1 -3.4,4.1 -5.4,0 Z" fill="none" stroke="#5a5a5a" stroke-width="0.9"/><circle cx="0" cy="0" r="2.2" fill="none" stroke="#5a5a5a" stroke-width="0.9"/></svg>
<svg class="ic" style="left:349.40px;top:342.60px" width="16" height="16" viewBox="-8 -8 16 16"><path d="M-3.5,-4 V3.6 A3.6,1.3 0 0 0 3.3,3.6 V-4" fill="none" stroke="#5a5a5a" stroke-width="0.9"/><ellipse cx="-0.1" cy="-4" rx="3.4" ry="1.25" fill="none" stroke="#5a5a5a" stroke-width="0.9"/><path d="M-5.1,1.2 H-1.4" stroke="#aaa" stroke-width="0.9"/><path d="M-1.6,-0.9 L1,1.2 L-1.6,3.3 Z" fill="#444"/></svg>
<svg class="ic" style="left:384.85px;top:342.60px" width="16" height="16" viewBox="-8 -8 16 16"><path d="M3.6,-0.3 V-4 M-3.4,-4 V3.5 A3.5,1.3 0 0 0 2.2,4.6" fill="none" stroke="#5a5a5a" stroke-width="0.9"/><ellipse cx="0.1" cy="-4" rx="3.5" ry="1.25" fill="none" stroke="#5a5a5a" stroke-width="0.9"/><path d="M3.6,0.3 V3" stroke="#999" stroke-width="0.9"/><path d="M2.1,3 L5.1,3 L3.6,5.2 Z" fill="#444"/></svg>
<svg class="ic" style="left:420.45px;top:342.60px" width="16" height="16" viewBox="-8 -8 16 16"><rect x="-4.55" y="-4.3" width="9.1" height="8.9" rx="0.7" fill="none" stroke="#5a5a5a" stroke-width="0.9"/><path d="M-2.45,4.6 V1.8 H1.75 V4.6" fill="none" stroke="#5a5a5a" stroke-width="0.9"/><rect x="-2" y="2.9" width="1.9" height="1.9" fill="#444"/></svg>
<svg class="ic" style="left:447.55px;top:342.60px" width="16" height="16" viewBox="-8 -8 16 16"><path d="M-1.2,-2 V-4.1 H4.6 V4.6 H-1.2 V1.9" fill="none" stroke="#5a5a5a" stroke-width="0.9"/><path d="M-5.5,-3.2 Q-5,0 -2.2,0 H0.2" fill="none" stroke="#5a5a5a" stroke-width="0.9"/><path d="M-0.1,-1.6 L2.3,0 L-0.1,1.6 Z" fill="#444"/></svg>
<svg class="ic" style="left:474.65px;top:342.60px" width="16" height="16" viewBox="-8 -8 16 16"><path d="M-2.8,-3.4 V2.5 Q-2.8,3.3 -1.2,3.5 M3,-3.4 V-0.6" fill="none" stroke="#5a5a5a" stroke-width="0.9"/><ellipse cx="0.1" cy="-3.4" rx="2.9" ry="1.2" fill="none" stroke="#5a5a5a" stroke-width="0.9"/><path d="M2.1,0.3 Q1.3,0.4 1.3,1.6 V2.2 Q1.3,2.7 0.8,2.7 Q1.3,2.8 1.3,3.3 V3.9 Q1.3,5.1 2.1,5.2 M4.4,0.3 Q5.2,0.4 5.2,1.6 V2.2 Q5.2,2.7 5.7,2.7 Q5.2,2.8 5.2,3.3 V3.9 Q5.2,5.1 4.4,5.2" fill="none" stroke="#5a5a5a" stroke-width="0.85"/></svg>
<svg class="ic" style="left:502.05px;top:342.60px" width="16" height="16" viewBox="-8 -8 16 16"><path d="M-2.8,-2.5 V-3.7 Q-2.8,-4.3 -2.1,-4.3 H4.1 Q4.7,-4.3 4.7,-3.6 V2.2 Q4.7,2.8 4.1,2.8 H3.1" fill="none" stroke="#5a5a5a" stroke-width="0.9"/><rect x="-4.7" y="-2.0" width="7.6" height="6.6" rx="0.8" fill="none" stroke="#5a5a5a" stroke-width="0.9"/><path d="M-2.6,0.2 L-1.2,2.3 L-0.4,1 L0.6,2.8" fill="none" stroke="#5a5a5a" stroke-width="0.85"/></svg>
<svg class="ic" style="left:537.45px;top:342.60px" width="16" height="16" viewBox="-8 -8 16 16"><path d="M-2.4,2.3 H-4.6 Q-5.1,2.3 -5.1,1.8 V-3.9 Q-5.1,-4.5 -4.5,-4.5 H-3.3 Q-2.5,-4.5 -2.5,-3.7" fill="#e6e6e6" stroke="#5a5a5a" stroke-width="0.9"/><path d="M-2.2,4.6 V-0.6 Q-2.2,-1.1 -1.7,-1.1 H-0.1 L0.7,-0.2 H4.8 Q5.3,-0.2 5.3,0.3 V4.6 Z" fill="#fff" stroke="#5a5a5a" stroke-width="0.9"/><path d="M0.6,-3.4 Q3.6,-3.6 3.7,-0.4" fill="none" stroke="#5a5a5a" stroke-width="0.9"/><path d="M0.6,-4.8 L2,-3.4 L0.6,-2 L-0.8,-3.4 Z" fill="#333"/><path d="M3.7,-1.6 L5.1,-0.2 L3.7,1.2 L2.3,-0.2 Z" fill="#333"/></svg>
<svg class="ic" style="left:564.60px;top:342.60px" width="16" height="16" viewBox="-8 -8 16 16"><path d="M-3.4,-3.5 V4.2 Q-3.4,4.7 -2.9,4.7 H2.6 Q3.1,4.7 3.1,4.2 V-3.5" fill="none" stroke="#5a5a5a" stroke-width="0.9"/><path d="M-3.9,-3.6 H3.6 M-1.9,-3.7 Q-1.9,-4.9 -0.15,-4.9 Q1.6,-4.9 1.6,-3.7" fill="none" stroke="#5a5a5a" stroke-width="0.9"/><rect x="-2" y="-0.7" width="3.6" height="2.5" fill="#8a8a8a"/></svg>
<svg class="ic" style="left:591.95px;top:342.60px" width="16" height="16" viewBox="-8 -8 16 16"><ellipse cx="-0.35" cy="-3.1" rx="2.5" ry="2.0" fill="none" stroke="#5a5a5a" stroke-width="0.9"/><path d="M-1.7,-1.3 L-1.3,4.3 Q-0.85,4.9 -0.4,4.3 L0.9,-1.3" fill="#bbb" stroke="#5a5a5a" stroke-width="0.8" stroke-linejoin="round"/><ellipse cx="3.35" cy="3.4" rx="1.7" ry="1.35" fill="none" stroke="#5a5a5a" stroke-width="0.9"/></svg>
<svg class="ic" style="left:619.40px;top:342.60px" width="16" height="16" viewBox="-8 -8 16 16"><path d="M-3.3,-3.6 V2.1 Q-3.3,2.9 -0.9,3.1 M2.9,-3.6 V-0.2" fill="none" stroke="#5a5a5a" stroke-width="0.9"/><ellipse cx="-0.2" cy="-3.6" rx="3.1" ry="1.25" fill="none" stroke="#5a5a5a" stroke-width="0.9"/><circle cx="2.65" cy="2.6" r="2.3" fill="#fff" stroke="#5a5a5a" stroke-width="0.9"/><path d="M1.5,0.6 Q1.8,-0.7 2.9,-0.7 Q3.9,-0.6 3.9,0.6 Z" fill="#333"/></svg>
<div class="r" style="left:374.50px;top:345.00px;width:1.00px;height:10.50px;background:#d9d9d9;"></div>
<div class="r" style="left:409.70px;top:345.00px;width:1.00px;height:10.50px;background:#d9d9d9;"></div>
<div class="r" style="left:527.60px;top:345.00px;width:1.00px;height:10.50px;background:#d9d9d9;"></div>
<div class="r" style="left:11.00px;top:359.80px;width:779.50px;height:1.00px;background:#e3e3e3;"></div>
<svg class="ic" style="left:18.00px;top:366.10px" width="10" height="11" viewBox="0 0 10 11"><circle cx="4.1" cy="2.2" r="1.75" fill="none" stroke="#666" stroke-width="0.9"/><path d="M0.45,9.7 V7.8 Q0.45,5.2 3,5.2 H5.2 Q7.75,5.2 7.75,7.8 V9.7 Z" fill="none" stroke="#666" stroke-width="0.9"/></svg>
<div class="t" style="left:36.80px;transform-origin:0 0;top:364.23px;font-size:8.580px;transform:scaleX(0.9091);color:#555;font-weight:normal;">Kai Rey</div>
<div class="t" style="left:240.50px;transform-origin:0 0;top:364.33px;font-size:8.580px;transform:scaleX(0.9091);color:#555;font-weight:normal;">Creator</div>
<div class="r" style="left:11.00px;top:379.90px;width:779.50px;height:1.00px;background:#eeeeee;"></div>
<svg class="ic" style="left:325.20px;top:366.90px" width="10" height="10" viewBox="-5 -5 10 10"><path d="M-2.4,0.6 L-0.9,2 L2.3,-2.3" fill="none" stroke="#40ac86" stroke-width="1.1" stroke-linecap="round" stroke-linejoin="round"/></svg>
<svg class="ic" style="left:352.40px;top:366.90px" width="10" height="10" viewBox="-5 -5 10 10"><path d="M-2.4,0.6 L-0.9,2 L2.3,-2.3" fill="none" stroke="#40ac86" stroke-width="1.1" stroke-linecap="round" stroke-linejoin="round"/></svg>
<svg class="ic" style="left:387.85px;top:366.90px" width="10" height="10" viewBox="-5 -5 10 10"><path d="M-2.4,0.6 L-0.9,2 L2.3,-2.3" fill="none" stroke="#40ac86" stroke-width="1.1" stroke-linecap="round" stroke-linejoin="round"/></svg>
<svg class="ic" style="left:423.45px;top:366.90px" width="10" height="10" viewBox="-5 -5 10 10"><path d="M-2.4,0.6 L-0.9,2 L2.3,-2.3" fill="none" stroke="#40ac86" stroke-width="1.1" stroke-linecap="round" stroke-linejoin="round"/></svg>
<svg class="ic" style="left:450.55px;top:366.90px" width="10" height="10" viewBox="-5 -5 10 10"><path d="M-2.4,0.6 L-0.9,2 L2.3,-2.3" fill="none" stroke="#40ac86" stroke-width="1.1" stroke-linecap="round" stroke-linejoin="round"/></svg>
<svg class="ic" style="left:477px;top:366px" width="10" height="10" viewBox="-5.5 -5.5 10 10"><path d="M-2.15,-2.15 L2.15,2.15 M2.15,-2.15 L-2.15,2.15" fill="none" stroke="#e4262e" stroke-width="1.1" stroke-linecap="butt"/></svg>
<svg class="ic" style="left:505.05px;top:366.90px" width="10" height="10" viewBox="-5 -5 10 10"><path d="M-2.4,0.6 L-0.9,2 L2.3,-2.3" fill="none" stroke="#40ac86" stroke-width="1.1" stroke-linecap="round" stroke-linejoin="round"/></svg>
<svg class="ic" style="left:540px;top:366px" width="10" height="10" viewBox="-5.5 -5.5 10 10"><path d="M-2.15,-2.15 L2.15,2.15 M2.15,-2.15 L-2.15,2.15" fill="none" stroke="#e4262e" stroke-width="1.1" stroke-linecap="butt"/></svg>
<svg class="ic" style="left:567px;top:366px" width="10" height="10" viewBox="-5.5 -5.5 10 10"><path d="M-2.15,-2.15 L2.15,2.15 M2.15,-2.15 L-2.15,2.15" fill="none" stroke="#e4262e" stroke-width="1.1" stroke-linecap="butt"/></svg>
<svg class="ic" style="left:594px;top:366px" width="10" height="10" viewBox="-5.5 -5.5 10 10"><path d="M-2.15,-2.15 L2.15,2.15 M2.15,-2.15 L-2.15,2.15" fill="none" stroke="#e4262e" stroke-width="1.1" stroke-linecap="butt"/></svg>
<svg class="ic" style="left:622.40px;top:366.90px" width="10" height="10" viewBox="-5 -5 10 10"><path d="M-2.4,0.6 L-0.9,2 L2.3,-2.3" fill="none" stroke="#40ac86" stroke-width="1.1" stroke-linecap="round" stroke-linejoin="round"/></svg>
<svg class="ic" style="left:18.00px;top:386.20px" width="10" height="11" viewBox="0 0 10 11"><circle cx="4.1" cy="2.2" r="1.75" fill="none" stroke="#666" stroke-width="0.9"/><path d="M0.45,9.7 V7.8 Q0.45,5.2 3,5.2 H5.2 Q7.75,5.2 7.75,7.8 V9.7 Z" fill="none" stroke="#666" stroke-width="0.9"/></svg>
<div class="t" style="left:36.80px;transform-origin:0 0;top:384.33px;font-size:8.580px;transform:scaleX(0.9091);color:#555;font-weight:normal;">Lari McEdward</div>
<div class="t" style="left:240.50px;transform-origin:0 0;top:384.43px;font-size:8.580px;transform:scaleX(0.9091);color:#555;font-weight:normal;">Site Administrat<span style="letter-spacing:0.9px">...</span></div>
<div class="r" style="left:11.00px;top:400.00px;width:779.50px;height:1.00px;background:#eeeeee;"></div>
<svg class="ic" style="left:325.20px;top:387.00px" width="10" height="10" viewBox="-5 -5 10 10"><path d="M-2.4,0.6 L-0.9,2 L2.3,-2.3" fill="none" stroke="#40ac86" stroke-width="1.1" stroke-linecap="round" stroke-linejoin="round"/></svg>
<svg class="ic" style="left:352.40px;top:387.00px" width="10" height="10" viewBox="-5 -5 10 10"><path d="M-2.4,0.6 L-0.9,2 L2.3,-2.3" fill="none" stroke="#40ac86" stroke-width="1.1" stroke-linecap="round" stroke-linejoin="round"/></svg>
<svg class="ic" style="left:387.85px;top:387.00px" width="10" height="10" viewBox="-5 -5 10 10"><path d="M-2.4,0.6 L-0.9,2 L2.3,-2.3" fill="none" stroke="#40ac86" stroke-width="1.1" stroke-linecap="round" stroke-linejoin="round"/></svg>
<svg class="ic" style="left:423.45px;top:387.00px" width="10" height="10" viewBox="-5 -5 10 10"><path d="M-2.4,0.6 L-0.9,2 L2.3,-2.3" fill="none" stroke="#40ac86" stroke-width="1.1" stroke-linecap="round" stroke-linejoin="round"/></svg>
<svg class="ic" style="left:450.55px;top:387.00px" width="10" height="10" viewBox="-5 -5 10 10"><path d="M-2.4,0.6 L-0.9,2 L2.3,-2.3" fill="none" stroke="#40ac86" stroke-width="1.1" stroke-linecap="round" stroke-linejoin="round"/></svg>
<svg class="ic" style="left:477.65px;top:387.00px" width="10" height="10" viewBox="-5 -5 10 10"><path d="M-2.4,0.6 L-0.9,2 L2.3,-2.3" fill="none" stroke="#40ac86" stroke-width="1.1" stroke-linecap="round" stroke-linejoin="round"/></svg>
<svg class="ic" style="left:505.05px;top:387.00px" width="10" height="10" viewBox="-5 -5 10 10"><path d="M-2.4,0.6 L-0.9,2 L2.3,-2.3" fill="none" stroke="#40ac86" stroke-width="1.1" stroke-linecap="round" stroke-linejoin="round"/></svg>
<svg class="ic" style="left:540.45px;top:387.00px" width="10" height="10" viewBox="-5 -5 10 10"><path d="M-2.4,0.6 L-0.9,2 L2.3,-2.3" fill="none" stroke="#40ac86" stroke-width="1.1" stroke-linecap="round" stroke-linejoin="round"/></svg>
<svg class="ic" style="left:567.60px;top:387.00px" width="10" height="10" viewBox="-5 -5 10 10"><path d="M-2.4,0.6 L-0.9,2 L2.3,-2.3" fill="none" stroke="#40ac86" stroke-width="1.1" stroke-linecap="round" stroke-linejoin="round"/></svg>
<svg class="ic" style="left:594.95px;top:387.00px" width="10" height="10" viewBox="-5 -5 10 10"><path d="M-2.4,0.6 L-0.9,2 L2.3,-2.3" fill="none" stroke="#40ac86" stroke-width="1.1" stroke-linecap="round" stroke-linejoin="round"/></svg>
<svg class="ic" style="left:622.40px;top:387.00px" width="10" height="10" viewBox="-5 -5 10 10"><path d="M-2.4,0.6 L-0.9,2 L2.3,-2.3" fill="none" stroke="#40ac86" stroke-width="1.1" stroke-linecap="round" stroke-linejoin="round"/></svg>
</body></html>
